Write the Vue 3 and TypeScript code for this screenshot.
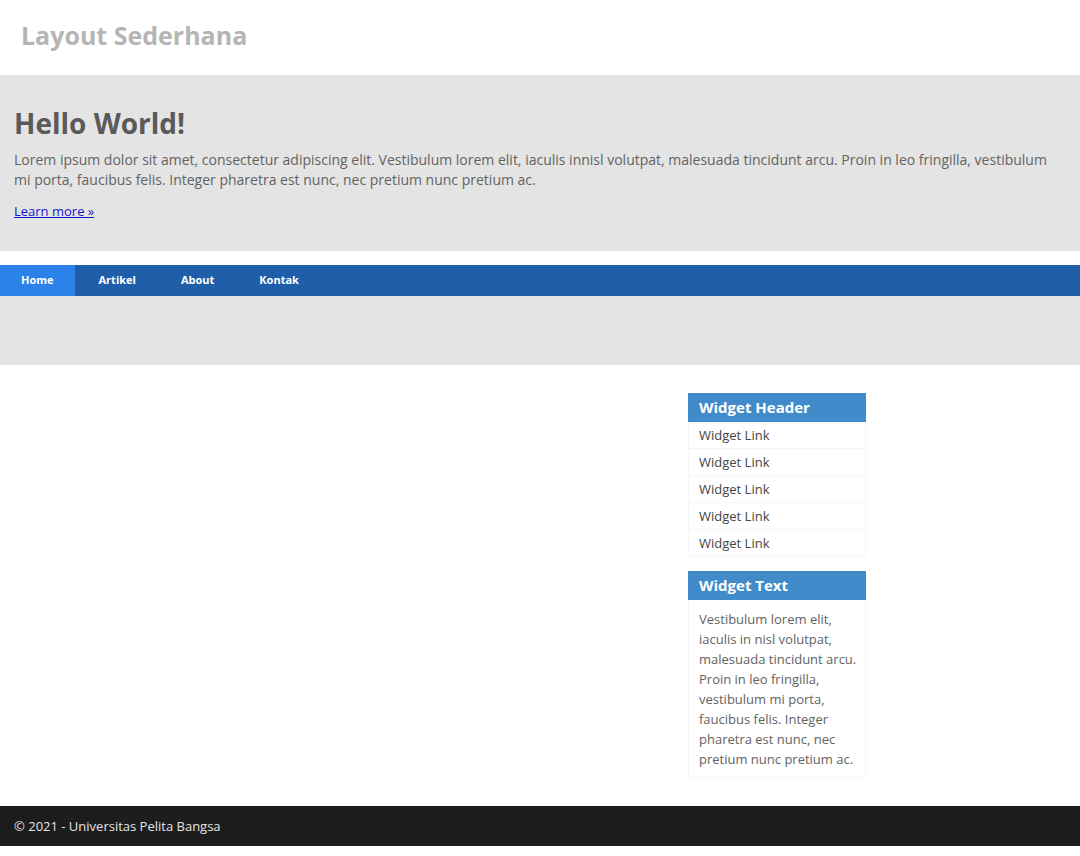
<script setup lang="ts">
const nav: string[] = ['Home', 'Artikel', 'About', 'Kontak']
const links: string[] = Array.from({ length: 5 }, () => 'Widget Link')
</script>

<template>
  <div class="page">
    <header><h1>Layout Sederhana</h1></header>
    <section class="hero">
      <h2>Hello World!</h2>
      <p>Lorem ipsum dolor sit amet, consectetur adipiscing elit. Vestibulum lorem elit, iaculis innisl volutpat, malesuada tincidunt arcu. Proin in leo fringilla, vestibulum mi porta, faucibus felis. Integer pharetra est nunc, nec pretium nunc pretium ac.</p>
      <a href="#">Learn more »</a>
    </section>
    <nav>
      <a v-for="(item, i) in nav" :key="item" href="#" :class="{ active: i === 0 }">{{ item }}</a>
    </nav>
    <div class="band"></div>
    <main>
      <aside>
        <section class="widget">
          <h3>Widget Header</h3>
          <ul>
            <li v-for="(link, i) in links" :key="i"><a href="#">{{ link }}</a></li>
          </ul>
        </section>
        <section class="widget">
          <h3>Widget Text</h3>
          <p>Vestibulum lorem elit, iaculis in nisl volutpat, malesuada tincidunt arcu. Proin in leo fringilla, vestibulum mi porta, faucibus felis. Integer pharetra est nunc, nec pretium nunc pretium ac.</p>
        </section>
      </aside>
    </main>
    <footer><p>© 2021 - Universitas Pelita Bangsa</p></footer>
  </div>
</template>

<style scoped>
.page {
  font-family: "Open Sans", sans-serif;
  font-size: 13px;
  line-height: 20px;
  color: #5a5a5a;
}
h1, h2, h3, p, ul {
  margin: 0;
  padding: 0;
}
header {
  padding: 18px 21px 22px;
}
h1 {
  font-size: 25px;
  line-height: 35px;
  color: #b5b5b5;
}
.hero {
  background: #e4e4e4;
  padding: 28px 14px 30px;
  margin-bottom: 14px;
}
.hero h2 {
  font-size: 28px;
  line-height: 40px;
  margin-bottom: 7px;
}
.hero p {
  font-size: 14px;
  margin-bottom: 11px;
  color: #636363;
}
.hero a {
  display: inline-block;
  color: #1a14cc;
}
nav {
  display: flex;
  gap: 3px;
  background: #1f5faa;
}
nav a {
  padding: 5px 21px 6px;
  font-size: 11px;
  font-weight: 700;
  color: #fff;
  text-decoration: none;
}
nav a.active {
  background: #2b83ea;
}
.band {
  height: 69px;
  background: #e4e4e4;
}
main {
  display: flex;
  padding: 28px 214px 28px 14px;
}
aside {
  width: 178px;
  margin-left: auto;
  display: grid;
  gap: 14px;
}
.widget {
  border: 1px solid #f6f6f6;
  border-top: 0;
}
h3 {
  margin: 0 -1px;
  padding: 4px 11px 5px;
  background: #428bca;
  color: #fff;
  font-size: 15px;
}
ul {
  list-style: none;
}
li + li {
  border-top: 1px solid #f6f6f6;
}
li a {
  display: block;
  padding: 3px 10px;
  color: #444;
  text-decoration: none;
}
.widget p {
  padding: 9px 8px 8px 10px;
  color: #636363;
}
footer {
  padding: 10px 14px;
  background: #1d1d1d;
  color: #e4e4e4;
}
</style>

<style>
body {
  margin: 0;
  background: #fff;
}
</style>
